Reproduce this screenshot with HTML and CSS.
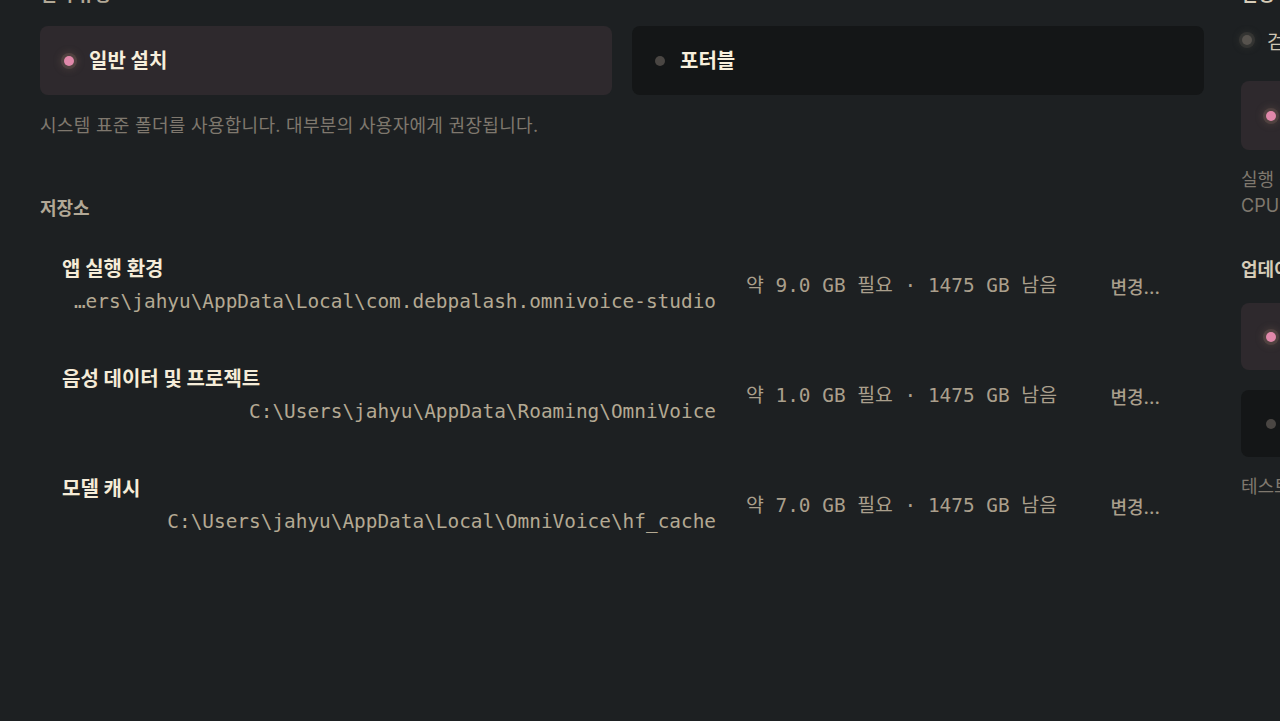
FILE: index.html
```html
<!DOCTYPE html>
<html lang="ko">
<head>
<meta charset="utf-8">
<title>설정</title>
<link rel="stylesheet" href="styles.css">
</head>
<body>
<div class="settings">
  <main class="main-col">
    <h3 class="section-label top">설치 유형</h3>
    <div class="options">
      <div class="option selected"><span class="dot pink"></span><span class="option-label">일반 설치</span></div>
      <div class="option"><span class="dot gray"></span><span class="option-label">포터블</span></div>
    </div>
    <p class="desc">시스템 표준 폴더를 사용합니다. 대부분의 사용자에게 권장됩니다.</p>

    <h3 class="section-label storage">저장소</h3>
    <div class="storage-list">
      <div class="storage-row">
        <div class="storage-main">
          <div class="storage-title">앱 실행 환경</div>
          <div class="storage-path">…ers\jahyu\AppData\Local\com.debpalash.omnivoice-studio</div>
        </div>
        <div class="storage-size">약 9.0 GB 필요 · 1475 GB 남음</div>
        <button class="change-btn">변경...</button>
      </div>
      <div class="storage-row">
        <div class="storage-main">
          <div class="storage-title">음성 데이터 및 프로젝트</div>
          <div class="storage-path">C:\Users\jahyu\AppData\Roaming\OmniVoice</div>
        </div>
        <div class="storage-size">약 1.0 GB 필요 · 1475 GB 남음</div>
        <button class="change-btn">변경...</button>
      </div>
      <div class="storage-row">
        <div class="storage-main">
          <div class="storage-title">모델 캐시</div>
          <div class="storage-path">C:\Users\jahyu\AppData\Local\OmniVoice\hf_cache</div>
        </div>
        <div class="storage-size">약 7.0 GB 필요 · 1475 GB 남음</div>
        <button class="change-btn">변경...</button>
      </div>
    </div>
  </main>

  <aside class="side-col">
    <h3 class="section-label top bright">실행 장치</h3>
    <div class="check-row"><span class="dot gray small-glow"></span><span class="check-text">검색된 장치 자동 선택</span></div>
    <div class="option selected side"><span class="dot pink"></span><span class="option-label">GPU 가속</span></div>
    <p class="desc side-desc">실행 장치를 선택합니다.<br>CPU 모드는 느리지만 모든 환경에서 동작합니다.</p>

    <h3 class="section-label bright update">업데이트</h3>
    <div class="option-stack">
      <div class="option selected side short"><span class="dot pink"></span><span class="option-label">안정 버전</span></div>
      <div class="option side short"><span class="dot gray"></span><span class="option-label">베타 버전</span></div>
    </div>
    <p class="desc side-desc">테스트 중인 기능을 먼저 받아볼 수 있습니다.</p>
  </aside>
</div>
</body>
</html>
```

FILE: styles.css
```css
html, body {
  margin: 0;
  padding: 0;
  background: #1d2022;
  overflow: hidden;
  height: 100%;
}

body {
  font-family: "Inter", "Noto Sans CJK KR", sans-serif;
  color: #f3ead7;
}

.settings {
  display: grid;
  grid-template-columns: 1164px 400px;
  column-gap: 37px;
  padding: 0 40px;
  margin-top: -17px;
  width: max-content;
}

.section-label {
  margin: 0;
  font-size: 18px;
  line-height: 24px;
  font-weight: 700;
  color: #b2a896;
}

.section-label.bright {
  color: #d6ccb8;
}

/* radio-like option cards */
.options {
  display: grid;
  grid-template-columns: 1fr 1fr;
  column-gap: 20px;
  margin-top: 19px;
}

.option {
  height: 69px;
  border-radius: 8px;
  background: #141617;
  display: flex;
  align-items: center;
  padding: 0 23px;
  box-sizing: border-box;
}

.option.selected {
  background: #2e292d;
  padding-left: 24px;
}

.option-label {
  margin-left: 15px;
  font-size: 20px;
  line-height: 24px;
  font-weight: 700;
  color: #f7efdc;
  white-space: nowrap;
}

.dot {
  width: 10px;
  height: 10px;
  border-radius: 50%;
  flex: none;
}

.dot.pink {
  background: #e088aa;
  box-shadow: 0 0 0 3px rgba(120, 95, 90, 0.35), 0 0 6px 5px rgba(110, 90, 80, 0.25);
}

.dot.gray {
  background: #4a4643;
}

.dot.small-glow {
  background: #57534e;
  box-shadow: 0 0 0 3px rgba(70, 68, 64, 0.45), 0 0 6px 4px rgba(70, 68, 64, 0.3);
}

.desc {
  margin: 19px 0 0;
  font-size: 18px;
  line-height: 24px;
  letter-spacing: 0.3px;
  color: #7f786e;
}

.section-label.storage {
  margin-top: 59px;
}

/* storage rows */
.storage-list {
  margin-top: 36px;
  display: flex;
  flex-direction: column;
  gap: 53px;
}

.storage-row {
  display: grid;
  grid-template-columns: 654px 1fr auto;
  column-gap: 30px;
  align-items: center;
  padding: 0 22px;
}

.storage-main {
  display: flex;
  flex-direction: column;
  gap: 9px;
  min-width: 0;
}

.storage-title {
  font-size: 20px;
  line-height: 24px;
  font-weight: 700;
  color: #f5ecd8;
}

.storage-path {
  font-family: "DejaVu Sans Mono", "Noto Sans CJK KR", monospace;
  font-size: 19.4px;
  line-height: 24px;
  color: #b4a993;
  text-align: right;
  white-space: nowrap;
  overflow: hidden;
}

.storage-size {
  font-family: "DejaVu Sans Mono", "Noto Sans CJK KR", monospace;
  font-size: 19.4px;
  line-height: 24px;
  color: #aa9f8c;
  white-space: nowrap;
}

.change-btn {
  background: none;
  border: none;
  padding: 6px 22px;
  font-family: "Inter", "Noto Sans CJK KR", sans-serif;
  font-size: 18px;
  font-weight: 500;
  color: #aa9f8c;
  cursor: pointer;
}

/* side column */
.side-col {
  display: flex;
  flex-direction: column;
}

.check-row {
  display: flex;
  align-items: center;
  margin-top: 21px;
  padding-left: 1px;
  height: 24px;
}

.check-text {
  margin-left: 15px;
  font-size: 19px;
  color: #cfc6b4;
  white-space: nowrap;
}

.option.side {
  margin-top: 29px;
  padding-left: 25px;
}

.side-desc {
  margin-top: 17px;
  line-height: 26px;
  letter-spacing: 0;
  white-space: nowrap;
}

.section-label.update {
  margin-top: 39px;
}

.option-stack {
  margin-top: 21px;
  display: flex;
  flex-direction: column;
  gap: 20px;
}

.option-stack .option.side {
  margin-top: 0;
  height: 67px;
}
```
